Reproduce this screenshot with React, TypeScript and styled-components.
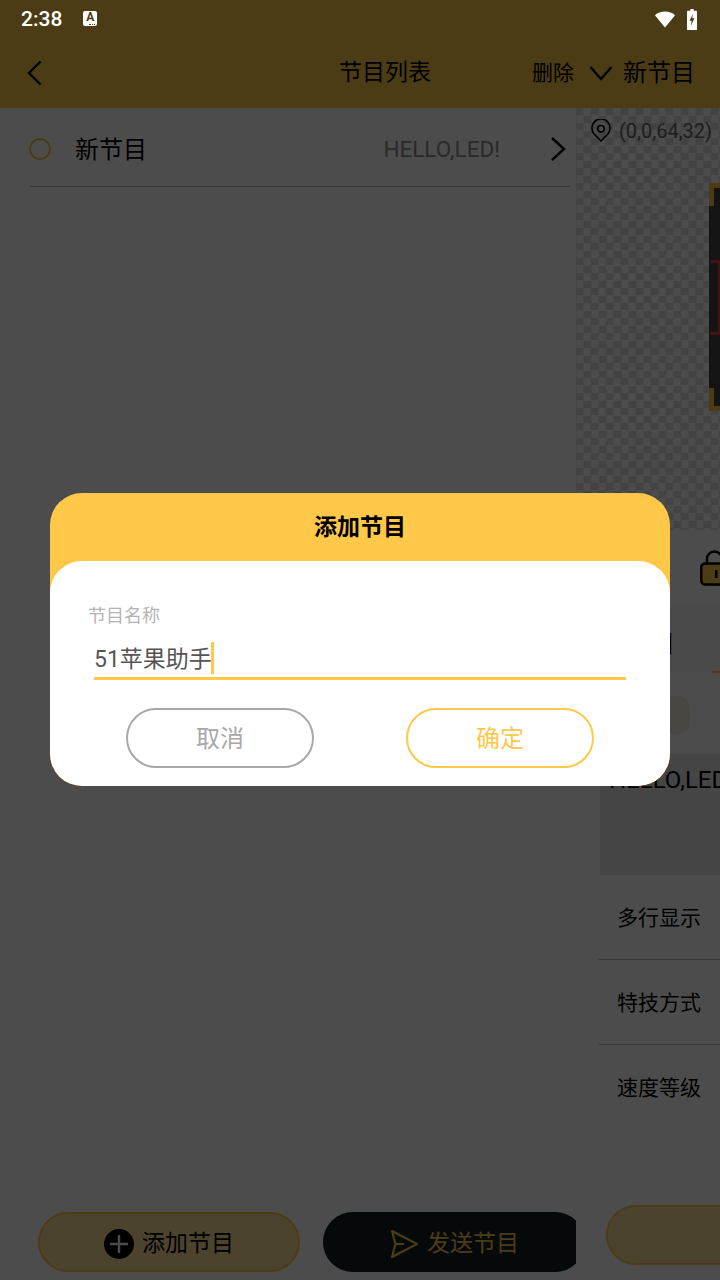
import styled, { createGlobalStyle } from "styled-components";

const GlobalStyle = createGlobalStyle`
	html, body {
		margin: 0;
		padding: 0;
		background: #fff;
	}

	* {
		box-sizing: border-box;
	}

	svg {
		flex: none;
	}
`;

const amber = "#ffc848";
const fontStack = `Roboto, "Noto Sans CJK SC", "Noto Sans", sans-serif`;

const Screen = styled.div`
	position: relative;
	display: flex;
	flex-direction: column;
	width: 720px;
	height: 1280px;
	overflow: hidden;
	background: #fff;
	color: #000;
	font-family: ${fontStack};
	line-height: 32px;
`;

/* TOP BAR */

const Top = styled.div`
	flex: none;
	height: 108px;
	background: ${amber};
`;

const StatusBar = styled.div`
	position: relative;
	z-index: 2;
	display: flex;
	align-items: center;
	height: 38px;
	padding: 0 23px 0 21px;
	color: #fff;
`;

const Time = styled.span`
	font-size: 21px;
	font-weight: 500;
	line-height: 38px;
`;

const InputBadge = styled.span`
	position: relative;
	display: flex;
	justify-content: center;
	width: 14px;
	height: 15px;
	margin: -2px 0 0 21px;
	border-radius: 2px;
	background: #fff;
	color: #4d3b16;
	font-size: 12px;
	font-weight: 700;
	line-height: 13px;

	&::after {
		content: "";
		position: absolute;
		right: 2px;
		bottom: 1px;
		width: 6px;
		border-bottom: 1px dotted #4d3b16;
	}
`;

const StatusIcons = styled.div`
	display: flex;
	align-items: center;
	gap: 11px;
	margin-left: auto;
`;

const Header = styled.div`
	display: flex;
	align-items: center;
	height: 70px;
	padding: 0 25px 0 26px;
`;

const HeaderTitle = styled.div`
	margin-left: 297px;
	font-size: 23px;
	white-space: nowrap;
`;

const HeaderActions = styled.div`
	display: flex;
	align-items: center;
	margin-left: auto;
`;

const DeleteLabel = styled.span`
	margin-right: 15px;
	font-size: 21px;
	line-height: 30px;
`;

const ProgramLabel = styled.span`
	margin-left: 10px;
	font-size: 24px;
	line-height: 30px;
`;

/* BODY */

const Body = styled.div`
	display: flex;
	flex: 1;
	min-height: 0;
`;

const ListPanel = styled.div`
	display: flex;
	flex: none;
	flex-direction: column;
	width: 576px;
	overflow: hidden;
`;

const ProgramRow = styled.div`
	display: flex;
	align-items: center;
	height: 79px;
	margin: 0 6px 0 30px;
	border-bottom: 1px solid #bbb;
`;

const Radio = styled.span`
	width: 22px;
	height: 22px;
	margin: 3px 24px 0 -1px;
	border: 2px solid ${amber};
	border-radius: 50%;
`;

const ProgramName = styled.span`
	margin-top: 6px;
	font-size: 24px;
`;

const ProgramText = styled.span`
	margin: 4px 50px 0 auto;
	color: #8c8c8c;
	font-size: 22.5px;
`;

const RowArrow = styled.span`
	display: flex;
	margin: 3px 4px 0 0;
`;

const ListFooter = styled.div`
	display: flex;
	gap: 23px;
	margin-top: auto;
	padding: 0 0 8px 38px;
`;

const PillButton = styled.div<{ $dark?: boolean }>`
	display: flex;
	flex: none;
	align-items: center;
	justify-content: center;
	gap: 8px;
	width: 262px;
	height: 60px;
	padding-top: 3px;
	border: 2px solid ${(p) => (p.$dark ? "#141f24" : amber)};
	border-radius: 30px;
	background: ${(p) => (p.$dark ? "#141f24" : "#ffdf9a")};
	color: ${(p) => (p.$dark ? amber : "#000")};
	font-size: 23px;
`;

/* EDITOR */

const EditorPanel = styled.div`
	display: flex;
	flex: 1;
	flex-direction: column;
	min-width: 0;
	overflow: hidden;
`;

const Canvas = styled.div`
	flex: none;
	height: 422px;
	padding: 10px 0 0 15px;
	background-color: #fff;
	background-image: conic-gradient(#e2e2e2 25%, #fff 0 50%, #e2e2e2 0 75%, #fff 0);
	background-position: 7.5px 0;
	background-size: 15px 15px;
`;

const Position = styled.div`
	display: flex;
	align-items: center;
	gap: 8px;
	height: 26px;
	color: #666;
	font-size: 20px;
	white-space: nowrap;
`;

const LedFrame = styled.div`
	position: relative;
	width: 200px;
	height: 228px;
	margin: 39px 0 0 118px;
	background: #444;
`;

const FrameCorner = styled.span<{ $bottom?: boolean }>`
	position: absolute;
	left: 0;
	${(p) => (p.$bottom ? "bottom: 0;" : "top: 0;")}
	width: 40px;
	height: 23px;
	border-left: 5px solid ${amber};
	${(p) => (p.$bottom ? `border-bottom: 5px solid ${amber};` : `border-top: 5px solid ${amber};`)}
`;

const TextMark = styled.span`
	position: absolute;
	top: 77px;
	left: 1px;
	width: 11px;
	height: 75px;
	border: 3px solid #e63c3c;
	border-left: 0;
	border-radius: 0 3px 3px 0;
`;

const LockRow = styled.div`
	display: flex;
	flex: none;
	align-items: flex-start;
	height: 75px;
	padding: 20px 0 0 124px;
`;

const TabRow = styled.div`
	display: flex;
	flex: none;
	height: 68px;
	background: #f7f7f7;
`;

const Tab = styled.div<{ $active?: boolean }>`
	display: flex;
	flex: none;
	align-items: center;
	justify-content: flex-end;
	width: ${(p) => (p.$active ? "60px" : "99px")};
	margin-left: ${(p) => (p.$active ? "37px" : "0")};
	padding-top: 12px;
	border-bottom: 2px solid ${(p) => (p.$active ? amber : "transparent")};
	font-size: 24px;
	white-space: nowrap;
`;

const ChipRow = styled.div`
	flex: none;
	height: 81px;
	padding-top: 23px;
`;

const Chip = styled.div`
	width: 114px;
	height: 38px;
	border-radius: 12px;
	background: #f4eddc;
`;

const TextBox = styled.div`
	flex: none;
	height: 121px;
	margin-left: 24px;
	padding: 8px 0 0 9px;
	background: #e8e8e8;
	font-size: 24px;
	line-height: 36px;
	white-space: nowrap;
`;

const OptionRow = styled.div<{ $last?: boolean }>`
	display: flex;
	flex: none;
	align-items: center;
	height: 85px;
	margin-left: 23px;
	padding: 2px 0 0 18px;
	border-bottom: 1px solid ${(p) => (p.$last ? "transparent" : "#bbb")};
	font-size: 21px;
	white-space: nowrap;
`;

const SaveButton = styled.div`
	flex: none;
	width: 200px;
	height: 60px;
	margin: auto 0 15px 30px;
	border: 2px solid ${amber};
	border-radius: 30px;
	background: #ffdf9a;
`;

/* DIALOG */

const Scrim = styled.div`
	position: absolute;
	inset: 0;
	z-index: 1;
	display: flex;
	align-items: center;
	justify-content: center;
	padding-bottom: 1px;
	background: rgba(0, 0, 0, 0.7);
`;

const Dialog = styled.div`
	width: 620px;
	height: 293px;
	border-radius: 32px;
	overflow: hidden;
	background: ${amber};
`;

const DialogTitle = styled.div`
	height: 68px;
	font-size: 23px;
	font-weight: 700;
	line-height: 69px;
	text-align: center;
`;

const DialogBody = styled.div`
	display: flex;
	flex-direction: column;
	height: 225px;
	padding: 41px 44px 0 38px;
	border-radius: 32px;
	background: #fff;
`;

const FieldLabel = styled.div`
	color: #b4b4b4;
	font-size: 18px;
	line-height: 28px;
`;

const Field = styled.div`
	display: flex;
	align-items: center;
	height: 38px;
	margin: 12px 0 0 6px;
	border-bottom: 3px solid ${amber};
	color: #555;
	font-size: 23px;
	white-space: nowrap;
`;

const Caret = styled.span`
	width: 3px;
	height: 32px;
	margin: -3px 0 0 -1px;
	background: ${amber};
`;

const DialogActions = styled.div`
	display: flex;
	justify-content: space-between;
	margin: 28px 32px 0 38px;
`;

const DialogButton = styled.div<{ $primary?: boolean }>`
	display: flex;
	align-items: center;
	justify-content: center;
	width: 188px;
	height: 60px;
	padding-top: 2px;
	border: 2px solid ${(p) => (p.$primary ? amber : "#a8a8a8")};
	border-radius: 30px;
	color: ${(p) => (p.$primary ? amber : "#a8a8a8")};
	font-size: 24px;
`;

/* ICONS */

const Wifi = () => (
	<svg width="22" height="17" viewBox="0 0 24 18" preserveAspectRatio="none">
		<path d="M1 4.5C4 2 7.8.6 12 .6s8 1.4 11 3.9L12 17.6z" fill="#fff" />
	</svg>
);

const Battery = () => (
	<svg width="10" height="21" viewBox="0 0 12 25" preserveAspectRatio="none">
		<path
			fillRule="evenodd"
			d="M4 0h4v2h3a1 1 0 0 1 1 1v21a1 1 0 0 1-1 1H1a1 1 0 0 1-1-1V3a1 1 0 0 1 1-1h3zM7 6 3 14h2.6L4.6 20 9 11H6.2z"
			fill="#fff"
		/>
	</svg>
);

const Chevron = ({ d, w, h }: { d: string; w: number; h: number }) => (
	<svg width={w} height={h} viewBox={`0 0 ${w} ${h}`} fill="none">
		<path d={d} stroke="#000" strokeWidth="2.4" />
	</svg>
);

const Pin = () => (
	<svg width="20" height="24" viewBox="0 0 22 25" fill="none" stroke="#000" strokeWidth="1.8">
		<path d="M11 23.5 3.6 16A10 10 0 1 1 18.4 16z" strokeLinejoin="round" />
		<circle cx="11" cy="10" r="3.6" />
	</svg>
);

const Lock = () => (
	<svg width="36" height="36" viewBox="0 0 36 36" fill="none">
		<path d="M7 14V9a7.5 7.5 0 0 1 15 0" stroke="#000" strokeWidth="2.5" />
		<rect x="1.2" y="13.5" width="32" height="21" rx="4" fill={amber} stroke="#000" strokeWidth="2.5" />
		<rect x="15" y="20" width="2.5" height="8" fill="#000" />
	</svg>
);

const PlusCircle = () => (
	<svg width="30" height="30" viewBox="0 0 30 30">
		<circle cx="15" cy="15" r="15" fill="#000" />
		<path d="M15 6v18M6 15h18" stroke="#fff" strokeWidth="2.4" />
	</svg>
);

const Send = () => (
	<svg width="30" height="30" viewBox="0 0 30 30" fill="none" stroke={amber} strokeWidth="2.2" strokeLinejoin="round">
		<path d="M3 2 28 15 3 28 6.5 15z" />
		<path d="M6.5 15H15" />
	</svg>
);

export default function App() {
	return (
		<Screen>
			<GlobalStyle />
			<Top>
				<StatusBar>
					<Time>2:38</Time>
					<InputBadge>A</InputBadge>
					<StatusIcons>
						<Wifi />
						<Battery />
					</StatusIcons>
				</StatusBar>
				<Header>
					<Chevron w={16} h={26} d="M14.5 1.5 3 13l11.5 11.5" />
					<HeaderTitle>节目列表</HeaderTitle>
					<HeaderActions>
						<DeleteLabel>删除</DeleteLabel>
						<Chevron w={24} h={16} d="M1.5 2 12 14 22.5 2" />
						<ProgramLabel>新节目</ProgramLabel>
					</HeaderActions>
				</Header>
			</Top>
			<Body>
				<ListPanel>
					<ProgramRow>
						<Radio />
						<ProgramName>新节目</ProgramName>
						<ProgramText>HELLO,LED!</ProgramText>
						<RowArrow>
							<Chevron w={16} h={26} d="M2 2 14 13 2 24" />
						</RowArrow>
					</ProgramRow>
					<ListFooter>
						<PillButton>
							<PlusCircle />
							添加节目
						</PillButton>
						<PillButton $dark>
							<Send />
							发送节目
						</PillButton>
					</ListFooter>
				</ListPanel>
				<EditorPanel>
					<Canvas>
						<Position>
							<Pin />
							(0,0,64,32)
						</Position>
						<LedFrame>
							<FrameCorner />
							<TextMark />
							<FrameCorner $bottom />
						</LedFrame>
					</Canvas>
					<LockRow>
						<Lock />
					</LockRow>
					<TabRow>
						<Tab>节目</Tab>
						<Tab $active />
					</TabRow>
					<ChipRow>
						<Chip />
					</ChipRow>
					<TextBox>HELLO,LED!</TextBox>
					<OptionRow>多行显示</OptionRow>
					<OptionRow>特技方式</OptionRow>
					<OptionRow $last>速度等级</OptionRow>
					<SaveButton />
				</EditorPanel>
			</Body>
			<Scrim>
				<Dialog>
					<DialogTitle>添加节目</DialogTitle>
					<DialogBody>
						<FieldLabel>节目名称</FieldLabel>
						<Field>
							51苹果助手
							<Caret />
						</Field>
						<DialogActions>
							<DialogButton>取消</DialogButton>
							<DialogButton $primary>确定</DialogButton>
						</DialogActions>
					</DialogBody>
				</Dialog>
			</Scrim>
		</Screen>
	);
}
